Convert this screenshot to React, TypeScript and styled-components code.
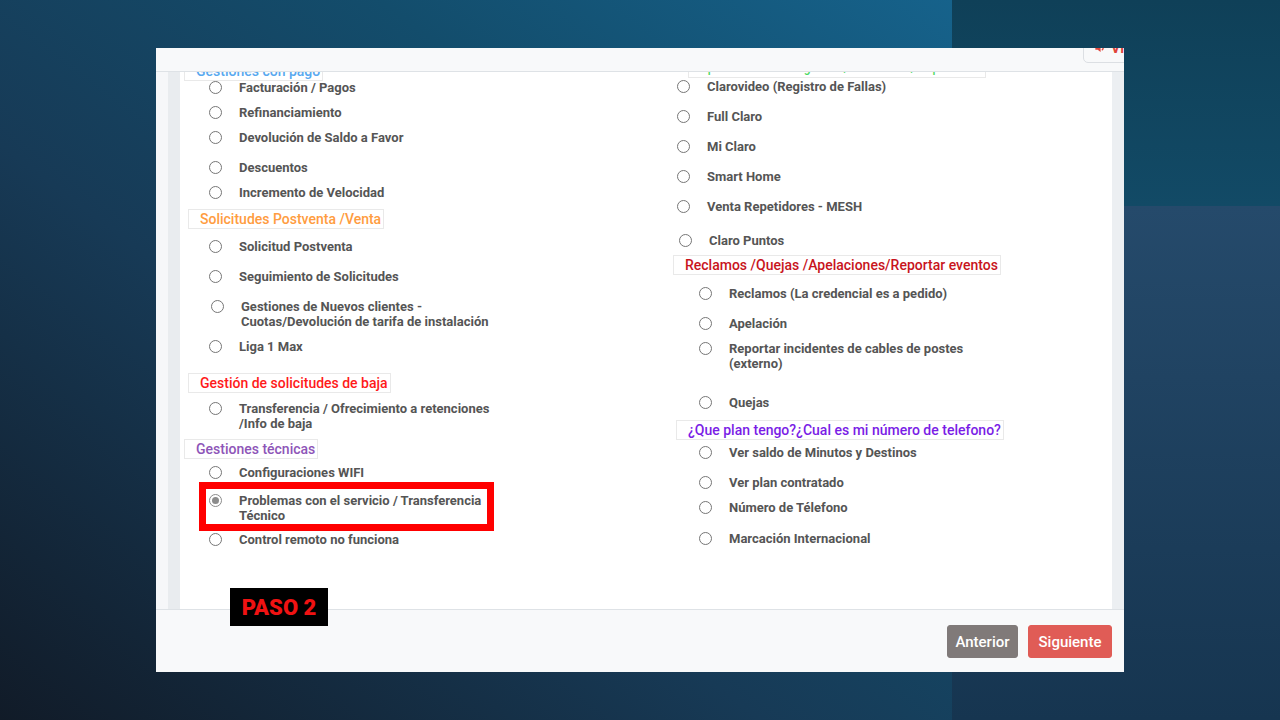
import React, { useLayoutEffect, useRef } from "react";
import styled, { createGlobalStyle, css } from "styled-components";

const Global = createGlobalStyle`
  html, body { margin: 0; padding: 0; }
  body { font-family: Roboto, "Liberation Sans", Arial, sans-serif; }
  * { box-sizing: border-box; }
`;

const Stage = styled.div`
  width: 1280px;
  height: 720px;
  overflow: hidden;
  display: grid;
  grid-template-columns: 952px 1fr;
  grid-template-rows: 206px 1fr;
`;

const BgMain = styled.div`
  grid-column: 1;
  grid-row: 1 / 3;
  background: linear-gradient(to bottom left, #16628b 0%, #134d6c 30%, #173a56 60%, #111b28 100%);
`;

const BgTop = styled.div`
  grid-column: 2;
  grid-row: 1;
  background: linear-gradient(to bottom, #0f4058, #124a66);
`;

const BgBottom = styled.div`
  grid-column: 2;
  grid-row: 2;
  background: linear-gradient(to bottom, #254a6b, #163550);
`;

const Panel = styled.div`
  grid-column: 1 / 3;
  grid-row: 1 / 3;
  margin: 48px 156px;
  position: relative;
  z-index: 1;
  background: #fff;
  display: flex;
  flex-direction: column;
  overflow: hidden;
`;

const Header = styled.div`
  flex: none;
  height: 24px;
  background: #f8f9fa;
  border-bottom: 1px solid #dee2e6;
  display: flex;
  justify-content: flex-end;
  align-items: flex-end;
  padding-bottom: 8px;
`;

const TopButton = styled.div`
  flex: none;
  width: 80px;
  height: 31px;
  margin-right: -39px;
  border: 1px solid #dcdfe3;
  border-radius: 5px;
  background: #f8f9fa;
  color: #e0443a;
  font-size: 14px;
  font-weight: 700;
  display: flex;
  align-items: center;
  gap: 4px;
  padding-left: 9px;
`;

const Body = styled.div`
  flex: 1;
  display: flex;
  min-height: 0;
`;

const LeftRail = styled.div`
  flex: none;
  width: 24px;
  background: linear-gradient(to right, #f6f7f9 0 12px, #e9ecef 12px 24px);
`;

const RightRail = styled.div`
  flex: none;
  width: 12px;
  background: #eceff2;
`;

const Scroll = styled.div`
  flex: 1;
  overflow: hidden;
  background: #fff;
`;

const Columns = styled.div`
  display: grid;
  grid-template-columns: 489px 1fr;
  padding: 10px 0 140px 4px;
`;

const Column = styled.div<{ $pt: number }>`
  display: flex;
  flex-direction: column;
  align-items: flex-start;
  padding-top: ${(p) => p.$pt}px;
`;

const Legend = styled.div<{ $color: string; $offset: number; $mt: number; $size: number }>`
  height: 20px;
  margin-left: ${(p) => p.$offset}px;
  margin-top: ${(p) => p.$mt}px;
  border: 1px solid #e9e9e9;
  padding: 0 2px 0 11px;
  font-size: ${(p) => p.$size}px;
  font-weight: 500;
  line-height: 18px;
  color: ${(p) => p.$color};
  white-space: nowrap;
`;

const OptionRow = styled.label<{ $indent: number; $mt: number }>`
  position: relative;
  display: flex;
  align-items: flex-start;
  padding-left: ${(p) => p.$indent}px;
  margin-top: ${(p) => p.$mt}px;
  font-size: 13px;
  line-height: 15px;
  font-weight: 700;
  color: #555;
  white-space: nowrap;
`;

const RadioMark = styled.span<{ $checked?: boolean }>`
  flex: none;
  position: relative;
  width: 13px;
  height: 13px;
  margin-top: 1px;
  margin-right: 17px;
  border-radius: 50%;
  border: 1px solid ${(p) => (p.$checked ? "#8c8c8c" : "#767676")};
  background: #fff;
  ${(p) =>
    p.$checked &&
    css`
      &::after {
        content: "";
        position: absolute;
        inset: 2px;
        border-radius: 50%;
        background: #8c8c8c;
      }
    `}
`;

const Highlight = styled.span`
  position: absolute;
  left: 15px;
  top: -11px;
  width: 295px;
  height: 49px;
  border: 7px solid #ff0000;
  pointer-events: none;
`;

const Footer = styled.div`
  flex: none;
  height: 63px;
  background: #f8f9fa;
  border-top: 1px solid #dee2e6;
  display: flex;
  justify-content: flex-end;
  align-items: flex-start;
  gap: 10px;
  padding: 15px 12px 0 0;
`;

const Btn = styled.button<{ $bg: string; $w: number }>`
  width: ${(p) => p.$w}px;
  height: 33px;
  border: 1px solid ${(p) => p.$bg};
  border-radius: 3px;
  background: ${(p) => p.$bg};
  color: #fff;
  font-family: Roboto, "Liberation Sans", sans-serif;
  font-size: 15px;
  font-weight: 500;
  padding: 0;
`;

const StepBadge = styled.div`
  position: absolute;
  left: 74px;
  top: 540px;
  width: 98px;
  height: 38px;
  background: #000;
  color: #f01212;
  font-family: Roboto, "Liberation Sans", Arial, sans-serif;
  font-weight: 900;
  font-size: 22px;
  display: flex;
  align-items: center;
  justify-content: center;
  z-index: 2;
`;

type Entry =
  | { kind: "legend"; text: string; color: string; offset: number; mt: number; size?: number }
  | { kind: "option"; lines: string[]; indent: number; mt: number; checked?: boolean; highlight?: boolean };

const leftEntries: Entry[] = [
  { kind: "legend", text: "Gestiones con pago", color: "#58a8ef", offset: 0, mt: 0 },
  { kind: "option", lines: ["Facturación / Pagos"], indent: 25, mt: -1 },
  { kind: "option", lines: ["Refinanciamiento"], indent: 25, mt: 10 },
  { kind: "option", lines: ["Devolución de Saldo a Favor"], indent: 25, mt: 10 },
  { kind: "option", lines: ["Descuentos"], indent: 25, mt: 15 },
  { kind: "option", lines: ["Incremento de Velocidad"], indent: 25, mt: 10 },
  { kind: "legend", text: "Solicitudes Postventa /Venta", color: "#ff9c40", offset: 4, mt: 9 },
  { kind: "option", lines: ["Solicitud Postventa"], indent: 25, mt: 10 },
  { kind: "option", lines: ["Seguimiento de Solicitudes"], indent: 25, mt: 15 },
  {
    kind: "option",
    lines: ["Gestiones de Nuevos clientes -", "Cuotas/Devolución de tarifa de instalación"],
    indent: 27,
    mt: 15,
  },
  { kind: "option", lines: ["Liga 1 Max"], indent: 25, mt: 10 },
  { kind: "legend", text: "Gestión de solicitudes de baja", color: "#ff1a1a", offset: 4, mt: 19 },
  { kind: "option", lines: ["Transferencia / Ofrecimiento a retenciones", "/Info de baja"], indent: 25, mt: 8 },
  { kind: "legend", text: "Gestiones técnicas", color: "#8e55b8", offset: 0, mt: 8 },
  { kind: "option", lines: ["Configuraciones WIFI"], indent: 25, mt: 6 },
  {
    kind: "option",
    lines: ["Problemas con el servicio / Transferencia", "Técnico"],
    indent: 25,
    mt: 13,
    checked: true,
    highlight: true,
  },
  { kind: "option", lines: ["Control remoto no funciona"], indent: 25, mt: 9 },
];

const rightEntries: Entry[] = [
  {
    kind: "legend",
    text: "Aplicativos de Autogestión/ Beneficios / Repetidores",
    color: "#4cd964",
    offset: 15,
    mt: 0,
    size: 12,
  },
  { kind: "option", lines: ["Clarovideo (Registro de Fallas)"], indent: 4, mt: 1 },
  { kind: "option", lines: ["Full Claro"], indent: 4, mt: 15 },
  { kind: "option", lines: ["Mi Claro"], indent: 4, mt: 15 },
  { kind: "option", lines: ["Smart Home"], indent: 4, mt: 15 },
  { kind: "option", lines: ["Venta Repetidores - MESH"], indent: 4, mt: 15 },
  { kind: "option", lines: ["Claro Puntos"], indent: 6, mt: 19 },
  {
    kind: "legend",
    text: "Reclamos /Quejas /Apelaciones/Reportar eventos",
    color: "#c8141c",
    offset: 0,
    mt: 7,
  },
  { kind: "option", lines: ["Reclamos (La credencial es a pedido)"], indent: 26, mt: 11 },
  { kind: "option", lines: ["Apelación"], indent: 26, mt: 15 },
  { kind: "option", lines: ["Reportar incidentes de cables de postes", "(externo)"], indent: 26, mt: 10 },
  { kind: "option", lines: ["Quejas"], indent: 26, mt: 24 },
  {
    kind: "legend",
    text: "¿Que plan tengo?¿Cual es mi número de telefono?",
    color: "#7a1de6",
    offset: 3,
    mt: 10,
  },
  { kind: "option", lines: ["Ver saldo de Minutos y Destinos"], indent: 26, mt: 5 },
  { kind: "option", lines: ["Ver plan contratado"], indent: 26, mt: 15 },
  { kind: "option", lines: ["Número de Télefono"], indent: 26, mt: 10 },
  { kind: "option", lines: ["Marcación Internacional"], indent: 26, mt: 16 },
];

function renderEntries(entries: Entry[]) {
  return entries.map((e, i) => {
    if (e.kind === "legend") {
      return (
        <Legend key={i} $color={e.color} $offset={e.offset} $mt={e.mt} $size={e.size ?? 14}>
          {e.text}
        </Legend>
      );
    }
    return (
      <OptionRow key={i} $indent={e.indent} $mt={e.mt}>
        <RadioMark $checked={e.checked} />
        <span>
          {e.lines.map((l, j) => (
            <React.Fragment key={j}>
              {j > 0 && <br />}
              {l}
            </React.Fragment>
          ))}
        </span>
        {e.highlight && <Highlight />}
      </OptionRow>
    );
  });
}

const SpeakerIcon = () => (
  <svg width="14" height="14" viewBox="0 0 24 24" fill="#e0443a" stroke="#e0443a" strokeWidth="2.5" strokeLinecap="round">
    <path d="M4 9h4l5-4v14l-5-4H4z" stroke="none" />
    <path d="M16 9a4 4 0 0 1 0 6" fill="none" />
  </svg>
);

export default function App() {
  const scrollRef = useRef<HTMLDivElement>(null);
  useLayoutEffect(() => {
    if (scrollRef.current) scrollRef.current.scrollTop = 27;
  }, []);
  return (
    <>
      <Global />
      <Stage>
        <BgMain />
        <BgTop />
        <BgBottom />
        <Panel>
          <Header>
            <TopButton>
              <SpeakerIcon />
              <span>Vídeo</span>
            </TopButton>
          </Header>
          <Body>
            <LeftRail />
            <Scroll ref={scrollRef}>
              <Columns>
                <Column $pt={6}>{renderEntries(leftEntries)}</Column>
                <Column $pt={3}>{renderEntries(rightEntries)}</Column>
              </Columns>
            </Scroll>
            <RightRail />
          </Body>
          <Footer>
            <Btn $bg="#807a79" $w={71}>Anterior</Btn>
            <Btn $bg="#e05c56" $w={84}>Siguiente</Btn>
          </Footer>
          <StepBadge>PASO 2</StepBadge>
        </Panel>
      </Stage>
    </>
  );
}
